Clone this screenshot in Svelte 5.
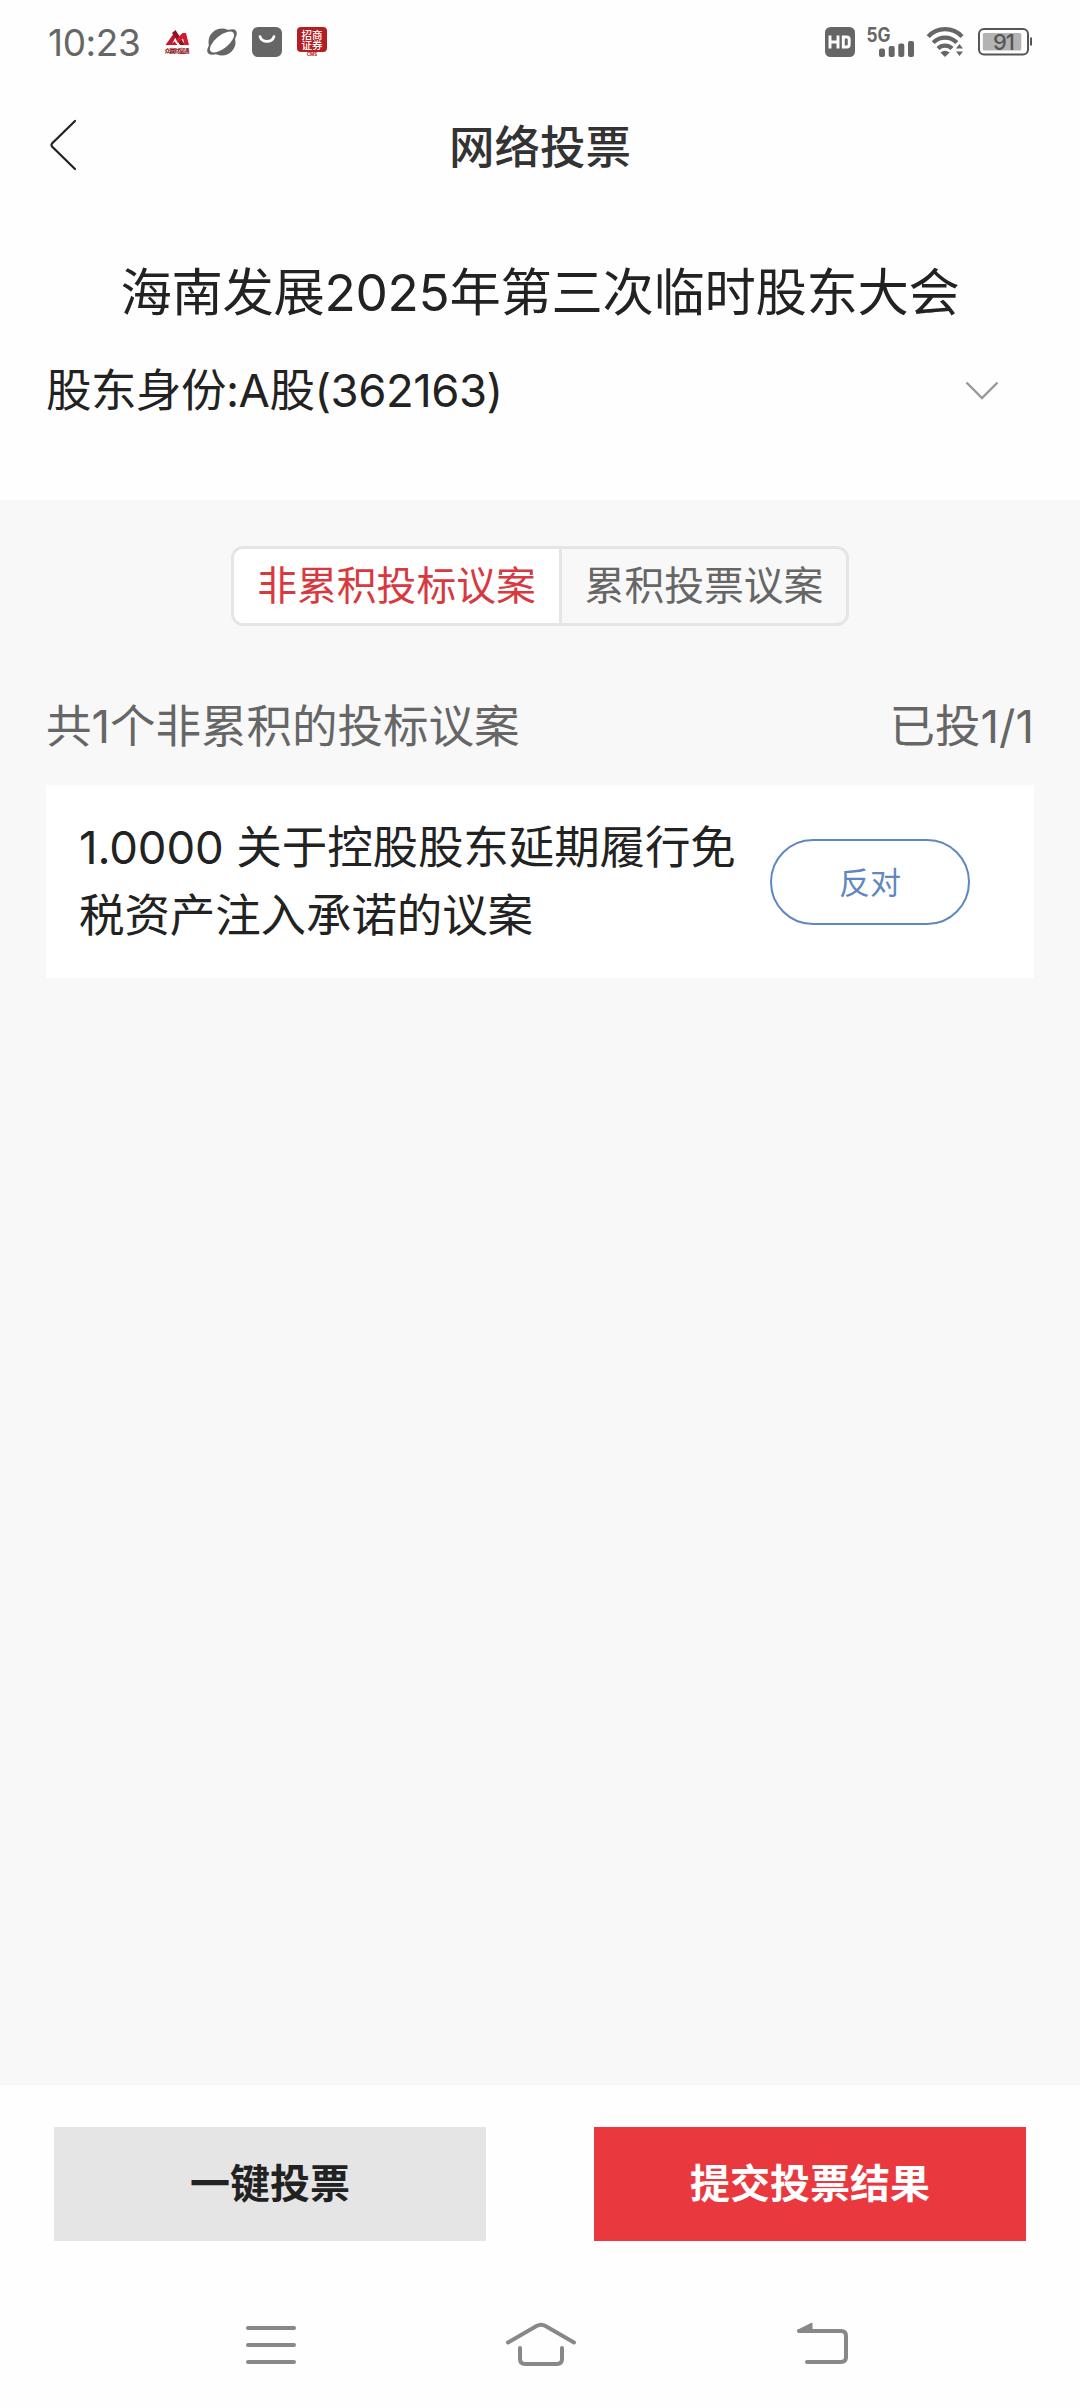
<script>
  let tabs = [
    { id: "normal", name: "非累积投标议案" },
    { id: "cumulative", name: "累积投票议案" },
  ];
  let activeTab = "normal";

  let motions = [
    { no: "1.0000", title: "关于控股股东延期履行免税资产注入承诺的议案", vote: "反对" },
  ];

  const battery = 91;
</script>

<div class="page">
  <div class="status-bar">
    <span class="time">10:23</span>
    <svg class="app-logo" width="26" height="24" viewBox="0 0 26 24">
      <path d="M1.500 15 9 4.500h4L7.500 15z" fill="#c3182b" />
      <path d="M8 3 11.500 0 21 15h-5z" fill="#8c1420" />
      <path d="M12 9.500 18.500 3H22l3 12h-4.500L19 8.500 14 13z" fill="#d01c30" />
      <path d="M6.500 15l4-3.500 3 3.500z" fill="#c3182b" />
      <text x="13" y="22.500" text-anchor="middle" font-size="6" font-weight="700" textLength="25" fill="#8c1420">众赢财富通</text>
    </svg>
    <svg class="planet" width="30" height="28" viewBox="0 0 30 28">
      <circle cx="15" cy="14" r="13.500" fill="#666" />
      <ellipse cx="15" cy="14" rx="18" ry="7.600" transform="rotate(-39 15 14)" fill="#666" />
      <ellipse cx="15" cy="14" rx="14.600" ry="6.500" transform="rotate(-39 15 14)" fill="#fff" />
    </svg>
    <svg class="bag" width="30" height="30" viewBox="0 0 30 30">
      <rect width="30" height="30" rx="6" fill="#666" />
      <path d="M8 9.500c2 6.500 12 6.500 14 0" fill="none" stroke="#fff" stroke-width="2.600" stroke-linecap="round" />
    </svg>
    <svg class="broker" width="30" height="30" viewBox="0 0 30 30">
      <rect width="30" height="25" rx="4" fill="#b51d20" />
      <text x="15" y="11.600" text-anchor="middle" font-size="10.500" font-weight="500" fill="#fff">招商</text>
      <text x="15" y="22.400" text-anchor="middle" font-size="10.500" font-weight="500" fill="#fff">证券</text>
      <text x="15" y="29.400" text-anchor="middle" font-size="4.600" font-weight="700" fill="#b51d20">CMS</text>
    </svg>

    <svg class="hd" width="30" height="30" viewBox="0 0 30 30">
      <rect width="30" height="30" rx="5.500" fill="#666" />
      <path d="M5 8.500v13M13 8.500v13M5 15h8" fill="none" stroke="#fff" stroke-width="2.900" />
      <path d="M18.300 10h3.400q2.500 0 2.500 2.500v5q0 2.500-2.500 2.500h-3.400z" fill="none" stroke="#fff" stroke-width="2.900" />
    </svg>
    <svg class="signal" width="48" height="30" viewBox="0 0 48 30">
      <text x="-.5" y="14.800" font-size="19.500" font-weight="700" textLength="24" lengthAdjust="spacingAndGlyphs" fill="#666">5G</text>
      <g fill="#666">
        <rect x="12" y="21.500" width="6" height="8.500" rx="2" />
        <rect x="21.700" y="19" width="6" height="11" rx="2" />
        <rect x="31.300" y="16.500" width="6" height="13.500" rx="2" />
        <rect x="41" y="14" width="6" height="16" rx="2" />
      </g>
    </svg>
    <svg class="wifi" width="37" height="29" viewBox="0 0 37 29">
      <g fill="none" stroke="#666" stroke-width="4.200">
        <path d="M1.200 8.600a23 23 0 0 1 33.800 0" />
        <path d="M6.200 14.600a16.400 16.400 0 0 1 23.600 0" />
        <path d="M11 20.400a10 10 0 0 1 14 0" />
      </g>
      <path d="M13.400 24.600q4.600-3.600 9.200 0L18 29z" fill="#666" />
      <path d="M29 20.600 32.500 16l3.500 4.600zM29 23.400h7L32.500 28z" fill="#666" />
    </svg>
    <svg class="battery" width="54" height="28" viewBox="0 0 54 28">
      <rect x="1" y="1" width="49" height="25.500" rx="5" fill="none" stroke="#555" stroke-width="2" />
      <rect x="4.800" y="5" width="38.500" height="17.500" rx="1.500" fill="#b3b3b3" />
      <path d="M53 9.500v8" stroke="#555" stroke-width="2" />
      <text x="25.500" y="21.800" text-anchor="middle" font-size="22" font-weight="500" letter-spacing="-1" fill="#555">{battery}</text>
    </svg>
  </div>

  <header class="nav-header">
    <button class="back" aria-label="返回">
      <svg width="28" height="52" viewBox="0 0 28 52">
        <path d="M26 2 3 24.500q-1.200 1.500 0 3L26 50" fill="none" stroke="#222" stroke-width="2.200" stroke-linecap="round" />
      </svg>
    </button>
    <h1>网络投票</h1>
  </header>

  <section class="meeting">
    <h2>海南发展2025年第三次临时股东大会</h2>
    <div class="identity">
      <span>股东身份:A股(362163)</span>
      <svg width="34" height="20" viewBox="0 0 34 20">
        <path d="M1.500 1.500 17 17 32.500 1.500" fill="none" stroke="#999" stroke-width="2.400" />
      </svg>
    </div>
  </section>

  <main>
    <div class="tabs">
      {#each tabs as tab}
        <button class="tab" class:active={activeTab === tab.id} on:click={() => (activeTab = tab.id)}>{tab.name}</button>
      {/each}
    </div>

    <div class="summary">
      <span>共1个非累积的投标议案</span>
      <span>已投1/1</span>
    </div>

    {#each motions as motion}
      <div class="motion">
        <p>{motion.no} {motion.title}</p>
        <button class="vote">{motion.vote}</button>
      </div>
    {/each}
  </main>

  <footer class="actions">
    <button class="btn">一键投票</button>
    <button class="btn primary">提交投票结果</button>
  </footer>

  <nav class="system-nav">
    <svg width="50" height="46" viewBox="0 0 50 46">
      <path d="M2 6h46M2 23h46M2 40h46" />
    </svg>
    <svg class="home" width="70" height="46" viewBox="0 0 70 46">
      <path d="M2 20.500 30.500 4q4.500-2.600 9 0L68 20.500" />
      <path d="M14 26v11q0 5 5 5h32q5 0 5-5V26" />
    </svg>
    <svg width="52" height="46" viewBox="0 0 52 46">
      <path d="M2 9h42q5 0 5 5v21q0 5-5 5H10" />
      <path class="arrow" d="M1 8 15 1v8H2z" />
    </svg>
  </nav>
</div>

<style>
  :global(body) {
    margin: 0;
    background: #fefefe;
  }

  .page {
    display: flex;
    flex-direction: column;
    width: 1080px;
    height: 2408px;
    overflow: hidden;
    background: #fefefe;
    color: #222;
    font-family: Inter, "Noto Sans CJK SC", sans-serif;
  }

  .page * {
    box-sizing: border-box;
  }

  button {
    padding: 0;
    border: none;
    background: none;
    color: inherit;
    font: inherit;
    cursor: pointer;
  }

  svg {
    display: block;
    flex: none;
    overflow: visible;
  }

  .status-bar {
    display: flex;
    align-items: center;
    height: 84px;
    padding: 0 48px 0 48px;
    flex: none;
  }

  .time {
    width: 116px;
    font-size: 37px;
    color: #666;
    letter-spacing: -0.4px;
  }

  .planet {
    margin-left: 17px;
  }

  .bag,
  .broker {
    margin-left: 15px;
  }

  .hd {
    margin-left: auto;
  }

  .signal {
    margin-left: 12px;
  }

  .wifi {
    margin-left: 12px;
  }

  .battery {
    margin-left: 14px;
  }

  .nav-header {
    display: grid;
    grid-template-columns: 80px 1fr 80px;
    align-items: center;
    height: 121px;
    flex: none;
  }

  .back {
    padding-left: 49px;
  }

  h1 {
    margin: 0;
    padding-bottom: 2px;
    font-size: 45.5px;
    font-weight: 500;
    text-align: center;
    color: #333;
  }

  .meeting {
    height: 295px;
    padding: 49px 46px 0;
    flex: none;
  }

  h2 {
    margin: 0;
    font-size: 51.3px;
    line-height: 76px;
    font-weight: 400;
    letter-spacing: -0.3px;
    text-align: center;
    white-space: nowrap;
  }

  .identity {
    display: flex;
    align-items: center;
    justify-content: space-between;
    height: 68px;
    margin-top: 27px;
    padding-right: 35px;
    font-size: 45.5px;
    line-height: 68px;
    letter-spacing: -0.5px;
  }

  main {
    flex: 1;
    padding: 46px 46px 0;
    background: #f8f8f8;
  }

  .tabs {
    display: flex;
    width: 618px;
    height: 80px;
    margin: 0 auto;
    border: 3px solid #e5e5e5;
    border-radius: 12px;
    overflow: hidden;
  }

  .tab {
    flex: 1;
    padding-bottom: 8px;
    font-size: 39.8px;
    color: #666;
  }

  .tab.active {
    flex: none;
    width: 328px;
    border-right: 3px solid #e5e5e5;
    background: #fff;
    color: #d8393f;
  }

  .summary {
    display: flex;
    justify-content: space-between;
    margin-top: 67px;
    font-size: 45.5px;
    line-height: 68px;
    color: #666;
  }

  .motion {
    display: flex;
    align-items: center;
    justify-content: space-between;
    height: 193px;
    margin-top: 24px;
    padding: 0 64px 0 33px;
    background: #fff;
  }

  .motion p {
    width: 670px;
    margin: 0;
    font-size: 45.5px;
    line-height: 68px;
    letter-spacing: -0.1px;
    word-break: break-all;
  }

  .vote {
    width: 200px;
    height: 86px;
    padding-bottom: 3px;
    border: 2px solid #5f87c1;
    border-radius: 43px;
    font-size: 31px;
    color: #5f87c1;
  }

  .actions {
    display: flex;
    justify-content: space-between;
    height: 237px;
    padding: 42px 54px 0;
    background: #fefefe;
    flex: none;
  }

  .btn {
    width: 432px;
    height: 114px;
    padding-bottom: 6px;
    background: #e5e5e5;
    font-size: 40px;
    font-weight: 700;
  }

  .btn.primary {
    background: #e9393f;
    color: #fff;
  }

  .system-nav {
    display: flex;
    height: 86px;
    padding: 0 231px 0 246px;
    flex: none;
  }

  .home {
    margin: 0 auto 0 210px;
  }

  .system-nav path {
    fill: none;
    stroke: #888;
    stroke-width: 4px;
    stroke-linecap: round;
  }

  .system-nav .arrow {
    fill: #888;
    stroke-width: 1px;
  }
</style>
